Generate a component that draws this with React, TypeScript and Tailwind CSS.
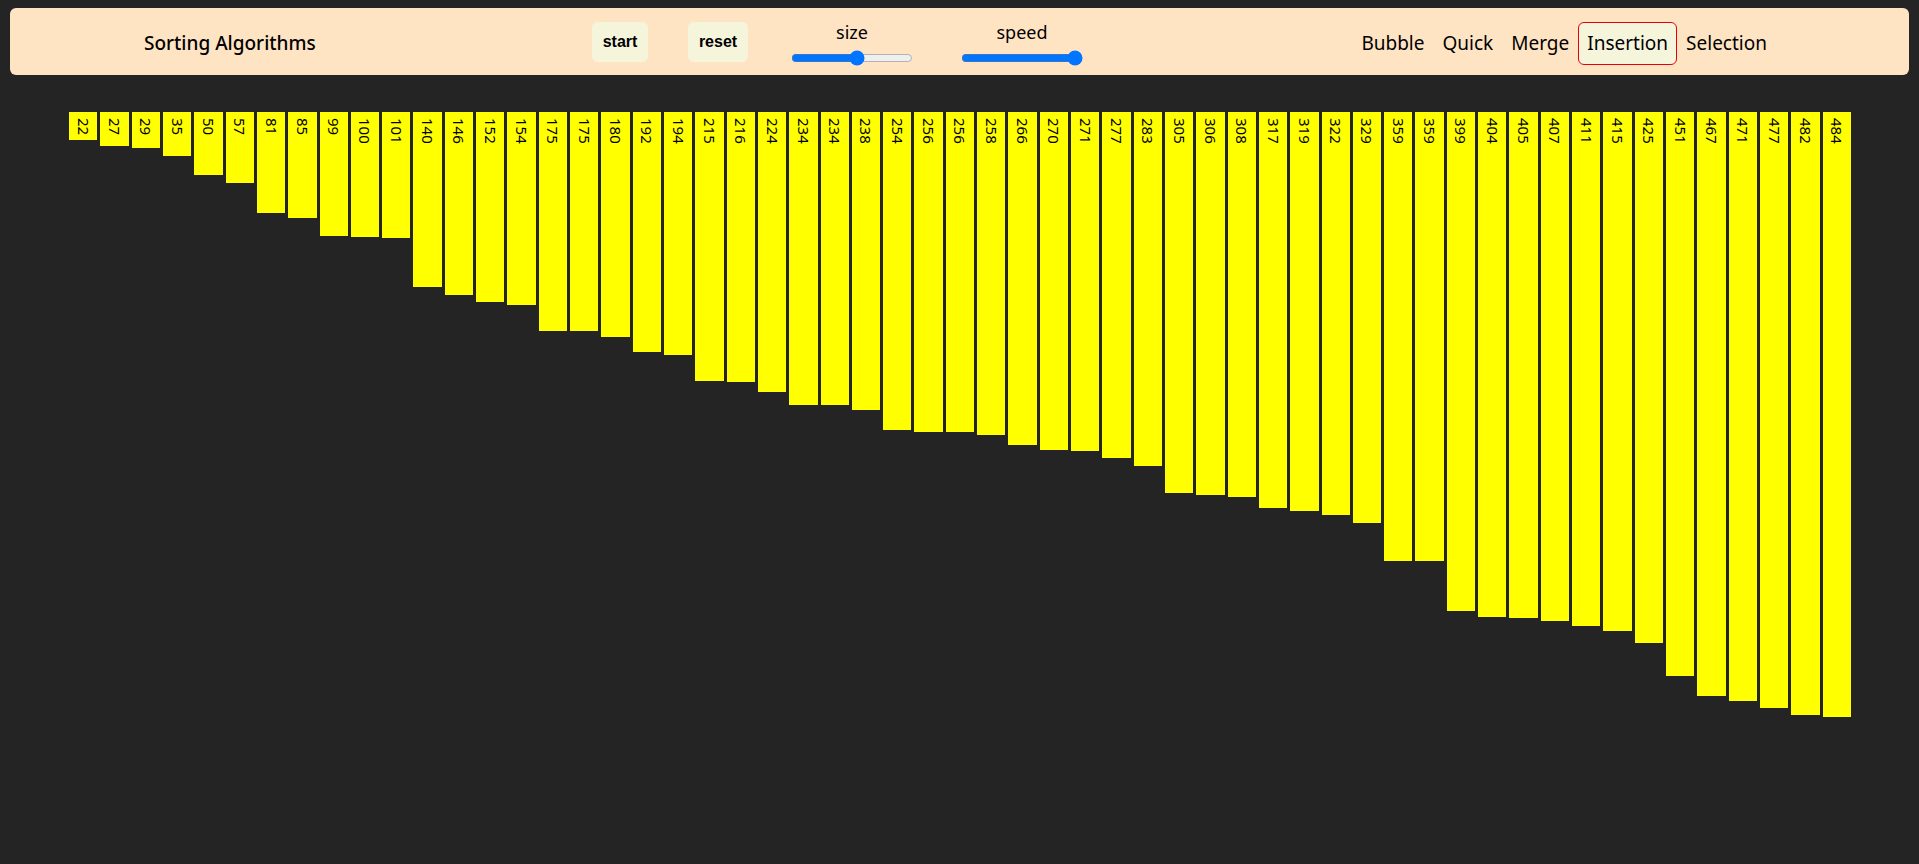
import { useState } from "react";

const values = [
  22, 27, 29, 35, 50, 57, 81, 85, 99, 100, 101, 140, 146, 152, 154, 175, 175, 180, 192, 194,
  215, 216, 224, 234, 234, 238, 254, 256, 256, 258, 266, 270, 271, 277, 283, 305, 306, 308, 317, 319,
  322, 329, 359, 359, 399, 404, 405, 407, 411, 415, 425, 451, 467, 471, 477, 482, 484,
];

const algorithms = ["Bubble", "Quick", "Merge", "Insertion", "Selection"];

export default function App() {
  const [selected, setSelected] = useState("Insertion");
  const [size, setSize] = useState(55);
  const [speed, setSpeed] = useState(100);

  return (
    <div className="min-h-screen bg-[#242424] pt-2 font-['Noto_Sans',sans-serif] text-black">
      <header className="mx-[10px] flex h-[67px] items-center rounded-md bg-[#ffe4c4] pl-[134px] pr-[133px]">
        <h1 className="w-[172px] shrink-0 pt-1 text-[19px] font-medium">Sorting Algorithms</h1>

        <div className="ml-[276px] flex items-center">
          <button className="h-10 w-14 rounded-md bg-[#f5f5dc] font-['Liberation_Sans',sans-serif] text-base font-bold">
            start
          </button>
          <button className="ml-10 h-10 w-[60px] rounded-md bg-[#f5f5dc] font-['Liberation_Sans',sans-serif] text-base font-bold">
            reset
          </button>
          <div className="ml-[43px] flex flex-col items-center pt-1">
            <span className="text-[18px] leading-5">size</span>
            <input
              type="range"
              min={0}
              max={100}
              value={size}
              onChange={(e) => setSize(Number(e.target.value))}
              className="mt-2 w-[122px] accent-[#0075ff]"
            />
          </div>
          <div className="ml-12 flex flex-col items-center pt-1">
            <span className="text-[18px] leading-5">speed</span>
            <input
              type="range"
              min={0}
              max={100}
              value={speed}
              onChange={(e) => setSpeed(Number(e.target.value))}
              className="mt-2 w-[122px] accent-[#0075ff]"
            />
          </div>
        </div>

        <nav className="ml-auto flex items-center pt-1">
          {algorithms.map((a) => (
            <button
              key={a}
              onClick={() => setSelected(a)}
              className={
                a === selected
                  ? "h-[43px] rounded-md border border-red-600 bg-[#f5f5dc] px-2 text-[19px]"
                  : "h-[43px] rounded-md border border-transparent px-2 text-[19px]"
              }
            >
              {a}
            </button>
          ))}
        </nav>
      </header>

      <div className="mt-[37px] flex items-start gap-[3px] pl-[69px] pr-[68px]">
        {values.map((v, i) => (
          <div
            key={i}
            className="flex flex-1 justify-center bg-[#ffff00] pt-[6px]"
            style={{ height: v * 1.25 }}
          >
            <span className="text-[15px] leading-none [writing-mode:vertical-rl]">{v}</span>
          </div>
        ))}
      </div>
    </div>
  );
}
